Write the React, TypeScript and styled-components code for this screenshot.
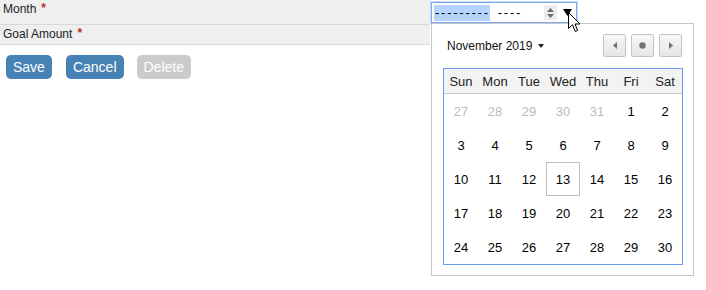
import styled, { createGlobalStyle } from "styled-components";

const GlobalStyle = createGlobalStyle`
  body {
    margin: 0;
    background: #fff;
    font-family: "Liberation Sans", Arial, sans-serif;
  }
`;

const Page = styled.div`
  width: 706px;
  height: 290px;
  position: relative;
`;

const FormRow = styled.div`
  display: grid;
  grid-template-columns: 430px 1fr;
`;

const LabelCell = styled.div<{ $h: number }>`
  height: ${(p) => p.$h}px;
  background: #efefef;
  border-bottom: 1px solid #d9d9d9;
  padding: 2px 0 0 3px;
  box-sizing: border-box;
  font-size: 12px;
  line-height: 14px;
  color: #222;
`;

const Required = styled.span`
  position: relative;
  top: -1px;
  color: #c0262d;
  font-weight: bold;
  margin-left: 5px;
`;

const ValueCell = styled.div`
  padding: 2px 0 0 1px;
`;

const DateField = styled.div`
  position: relative;
  width: 146px;
  height: 21px;
  box-sizing: border-box;
  border: 1px solid #7da8ea;
  box-shadow: 0 0 0 1px #c6dafa;
  display: flex;
  align-items: center;
  padding-left: 2px;
  font-size: 13px;
  color: #000;
`;

const Segment = styled.span<{ $selected?: boolean }>`
  display: inline-block;
  height: 16px;
  line-height: 16px;
  letter-spacing: 1.75px;
  padding-left: 1px;
  background: ${(p) => (p.$selected ? "#b4d4fd" : "transparent")};
  margin-right: ${(p) => (p.$selected ? "7px" : "0")};
`;

const Spinner = styled.div`
  margin-left: auto;
  width: 13px;
  height: 15px;
  background: #ececec;
  display: flex;
  flex-direction: column;
  align-items: center;
  justify-content: center;
  gap: 2px;
`;

const Picker = styled.div`
  width: 12px;
  height: 15px;
  margin: 0 3px 0 4px;
  display: flex;
  align-items: center;
  justify-content: center;
`;

const Cursor = styled.svg`
  position: absolute;
  left: 136px;
  top: 9px;
  z-index: 3;
`;

const Popup = styled.div`
  position: absolute;
  left: -1px;
  top: 20px;
  width: 263px;
  box-sizing: border-box;
  background: #fff;
  border: 1px solid #c6c6c6;
  padding: 10px 10px 10px 11px;
  z-index: 2;
`;

const PopupHeader = styled.div`
  display: flex;
  align-items: center;
  height: 23px;
  margin-bottom: 11px;
`;

const MonthTitle = styled.div`
  display: flex;
  align-items: center;
  gap: 6px;
  padding-left: 4px;
  font-size: 12px;
  color: #111;
`;

const Caret = styled.span`
  width: 0;
  height: 0;
  border-left: 3.5px solid transparent;
  border-right: 3.5px solid transparent;
  border-top: 4px solid #222;
`;

const NavGroup = styled.div`
  margin-left: auto;
  display: flex;
  gap: 5px;
  margin-right: 1px;
`;

const NavButton = styled.button`
  width: 23px;
  height: 23px;
  padding: 0;
  border: 1px solid #c4c4c4;
  border-radius: 2px;
  background: linear-gradient(#f7f7f7, #e6e6e6);
  display: flex;
  align-items: center;
  justify-content: center;
`;

const Calendar = styled.div`
  display: grid;
  grid-template-columns: repeat(7, 34px);
  border: 1px solid #6a9ef3;
  width: 240px;
  box-sizing: border-box;
`;

const DayName = styled.div`
  height: 24px;
  background: #f3f3f3;
  border-bottom: 1px solid #c9c9c9;
  display: flex;
  align-items: center;
  justify-content: center;
  font-size: 13px;
  color: #222;
`;

const DayCell = styled.div<{ $muted?: boolean; $today?: boolean }>`
  height: 34px;
  box-sizing: border-box;
  display: flex;
  align-items: center;
  justify-content: center;
  font-size: 13px;
  color: ${(p) => (p.$muted ? "#bcbcbc" : "#000")};
  border: 1px solid ${(p) => (p.$today ? "#bdbdbd" : "transparent")};
`;

const Actions = styled.div`
  display: flex;
  gap: 14px;
  padding: 10px 0 0 6px;
`;

const Button = styled.button<{ $disabled?: boolean }>`
  height: 24px;
  padding: 0 7px;
  border: none;
  border-radius: 5px;
  background: ${(p) => (p.$disabled ? "#cbcbcb" : "#4682b4")};
  color: #fff;
  font-family: "Liberation Sans", Arial, sans-serif;
  font-size: 14px;
  line-height: 24px;
  &:last-child {
    margin-left: -1px;
  }
`;

const dayNames = ["Sun", "Mon", "Tue", "Wed", "Thu", "Fri", "Sat"];

const days: { n: number; muted?: boolean }[] = [
  ...[27, 28, 29, 30, 31].map((n) => ({ n, muted: true })),
  ...Array.from({ length: 30 }, (_, i) => ({ n: i + 1 })),
];

function MonthInput() {
  return (
    <DateField>
      <Segment $selected>---------</Segment>
      <Segment>----</Segment>
      <Spinner>
        <svg width="7" height="4" viewBox="0 0 7 4">
          <path d="M0 4 L3.5 0 L7 4 Z" fill="#6b6b6b" />
        </svg>
        <svg width="7" height="4" viewBox="0 0 7 4">
          <path d="M0 0 L3.5 4 L7 0 Z" fill="#6b6b6b" />
        </svg>
      </Spinner>
      <Picker>
        <svg width="9" height="7" viewBox="0 0 9 7">
          <path d="M0 0 L9 0 L4.5 7 Z" fill="#000" />
        </svg>
      </Picker>
      <Cursor width="13" height="21" viewBox="0 0 13 21">
        <path
          d="M0.5 0.5 L0.5 16.5 L4.5 12.8 L7.2 19.5 L9.6 18.5 L7 12 L12 12 Z"
          fill="#fff"
          stroke="#000"
          strokeWidth="1"
          strokeLinejoin="round"
        />
      </Cursor>
      <Popup>
        <PopupHeader>
          <MonthTitle>
            November 2019
            <Caret />
          </MonthTitle>
          <NavGroup>
            <NavButton>
              <svg width="4" height="7" viewBox="0 0 4 7">
                <path d="M4 0 L0 3.5 L4 7 Z" fill="#707070" />
              </svg>
            </NavButton>
            <NavButton>
              <svg width="7" height="7" viewBox="0 0 7 7">
                <circle cx="3.5" cy="3.5" r="3.2" fill="#707070" />
              </svg>
            </NavButton>
            <NavButton>
              <svg width="4" height="7" viewBox="0 0 4 7">
                <path d="M0 0 L4 3.5 L0 7 Z" fill="#707070" />
              </svg>
            </NavButton>
          </NavGroup>
        </PopupHeader>
        <Calendar>
          {dayNames.map((d) => (
            <DayName key={d}>{d}</DayName>
          ))}
          {days.map((d, i) => (
            <DayCell key={i} $muted={d.muted} $today={!d.muted && d.n === 13}>
              {d.n}
            </DayCell>
          ))}
        </Calendar>
      </Popup>
    </DateField>
  );
}

export default function App() {
  return (
    <Page>
      <GlobalStyle />
      <FormRow>
        <LabelCell $h={25}>
          Month<Required>*</Required>
        </LabelCell>
        <ValueCell>
          <MonthInput />
        </ValueCell>
      </FormRow>
      <FormRow>
        <LabelCell $h={20}>
          Goal Amount<Required>*</Required>
        </LabelCell>
        <ValueCell />
      </FormRow>
      <Actions>
        <Button>Save</Button>
        <Button>Cancel</Button>
        <Button $disabled>Delete</Button>
      </Actions>
    </Page>
  );
}
